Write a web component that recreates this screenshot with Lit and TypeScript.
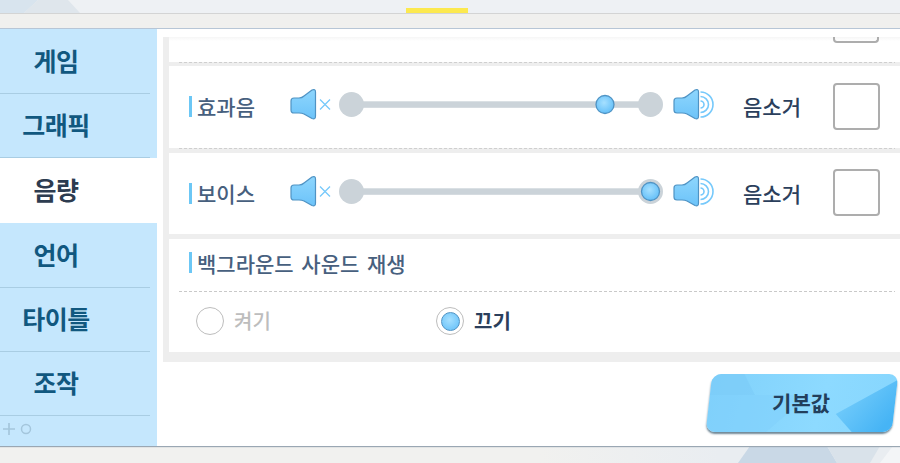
import { LitElement, html, css, svg } from "lit";
import { customElement } from "lit/decorators.js";

const speaker = (x: number) => svg`
  <path d="M${x + 1} 12 Q${x + 1} 9 ${x + 4} 9 L${x + 9} 9 Q${x + 12} 9 ${x + 14} 7 L${x + 22} 1 Q${x + 25.500} -0.500 ${x + 25.500} 3 L${x + 25.500} 27 Q${x + 25.500} 31 ${x + 22} 29.500 L${x + 14} 25 Q${x + 12} 24 ${x + 9} 24 L${x + 4} 24 Q${x + 1} 24 ${x + 1} 21 Z"
    fill="url(#cone)" stroke="#4f93c4" stroke-width="1.200" stroke-linejoin="round"/>`;

@customElement("app-root")
export class AppRoot extends LitElement {
  static styles = css`
    :host {
      display: block;
      width: 900px;
      height: 463px;
      overflow: hidden;
      background: #f1f1ef;
      font-family: "Noto Sans CJK KR", "Noto Sans", sans-serif;
    }
    .page { display: flex; flex-direction: column; height: 463px; position: relative; }
    .top {
      height: 13px;
      flex: none;
      background: #eef1f4;
      border-bottom: 1px solid #d3d4d4;
      position: relative;
      overflow: hidden;
    }
    .top svg { position: absolute; left: 0; top: 0; }
    .yellow { position: absolute; left: 406px; top: 8px; width: 62px; height: 5px; background: #fce94f; }
    .strip { height: 14px; flex: none; background: #f0f0ee; border-bottom: 1px solid #b7c6d6; }
    .main { height: 417px; flex: none; display: flex; background: #fff; box-shadow: 0 1px 1px #9aa7b3; position: relative; z-index: 1; }
    .nav { width: 157px; flex: none; background: #c5e7fd; display: flex; flex-direction: column; padding-top: 1px; box-sizing: border-box; }
    .tab {
      height: 64.200px;
      flex: none;
      box-sizing: border-box;
      display: flex;
      align-items: center;
      color: #11587f;
      font-size: 25px;
      font-weight: 700;
      letter-spacing: -0.500px;
      border-bottom: 1px solid #a9cde3;
      margin-right: 7px;
    }
    .tab span { width: 112px; text-align: center; line-height: 1; margin-top: -2px; }
    .tab.active { background: #fff; color: #2d3c50; margin-right: 0; border-bottom: none; }
    .tab.active + .tab { margin-top: 1px; }
    .navfoot { flex: 1; display: flex; align-items: flex-end; padding: 0 0 10px 2px; }
    .content { flex: 1; min-width: 0; padding: 8px 0 0 6px; display: flex; flex-direction: column; }
    .panel { background: #eeeeee; padding: 0 0 10px 6px; height: 325px; box-sizing: border-box; display: flex; flex-direction: column; }
    .card { background: #fff; flex: none; }
    .clip { height: 25px; display: flex; justify-content: flex-end; padding-right: 21px; background: linear-gradient(#f6f6f6, #fff 4px); }
    .clip i { display: block; width: 46px; height: 6px; box-sizing: border-box; border: 2px solid #adadad; border-top: none; border-radius: 0 0 4px 4px; }
    .sep { height: 4px; flex: none; display: flex; padding: 0 5px 0 10px; }
    .sep i { display: block; flex: 1; height: 1px; background: repeating-linear-gradient(90deg, #cfcfcf 0 3px, transparent 3px 5px); }
    .sep.s5 { height: 5px; }
    .row { height: 82px; display: flex; align-items: center; padding: 0 0 2px 20px; box-sizing: border-box; }
    .row.r2 { height: 81px; }
    .name { display: flex; align-items: center; width: 101px; flex: none; color: #47607e; font-size: 21px; font-weight: 500; line-height: 1; margin-top: 1px; }
    .bar { width: 3px; height: 21px; background: #6cc7f5; margin-right: 5px; flex: none; }
    .slider { flex: none; display: block; overflow: visible; }
    .mute { margin-left: 27px; width: 90px; flex: none; color: #2b3f5c; font-size: 21px; font-weight: 500; line-height: 1; margin-top: 1px; }
    .box { width: 47px; height: 47px; box-sizing: border-box; border: 2px solid #adadad; border-radius: 4px; flex: none; background: #fff; }
    .bg { height: 113px; padding: 13px 5px 0 10px; box-sizing: border-box; }
    .title { display: flex; align-items: center; padding-left: 10px; color: #47607e; font-size: 21px; font-weight: 500; line-height: 1; height: 21px; word-spacing: 3px; }
    .title b { font-weight: 500; margin-top: 2px; }
    .dash { height: 1px; margin-top: 18px; background: repeating-linear-gradient(90deg, #c9c9c9 0 3px, transparent 3px 5px); }
    .radios { display: flex; align-items: center; margin-top: 15px; padding-left: 17px; }
    .radio { width: 240px; display: flex; align-items: center; gap: 10px; font-size: 20px; font-weight: 500; line-height: 1; color: #bdbdbd; }
    .radio.on { color: #2b3f5c; font-weight: 700; }
    .circ { width: 28px; height: 28px; box-sizing: border-box; border-radius: 50%; border: 1.500px solid #bdbdbd; background: #fff; display: flex; align-items: center; justify-content: center; flex: none; }
    .dot { width: 19px; height: 19px; box-sizing: border-box; border-radius: 50%; border: 1.500px solid #4f93c4; background: radial-gradient(circle at 45% 40%, #a6e0ff, #5fbdf8); }
    .actions { flex: 1; display: flex; justify-content: flex-end; align-items: flex-start; padding: 12px 5px 0 0; }
    .btn {
      width: 186px;
      height: 58px;
      transform: skewX(-6.500deg);
      border-radius: 9px;
      background: linear-gradient(100deg, #80d1fb 0%, #8ddaff 60%, #86d6fe 100%);
      box-shadow: 0 2px 2px #6f8796;
      display: flex;
      align-items: center;
      justify-content: center;
      color: #233f5c;
      font-size: 21px;
      font-weight: 700;
      overflow: hidden;
      position: relative;
    }
    .btn svg { position: absolute; left: 0; top: 0; }
    .btn span { transform: skewX(6.500deg); line-height: 1; margin-top: -2px; margin-right: 2px; position: relative; }
    .bottom { flex: 1; position: relative; overflow: hidden; background: linear-gradient(90deg, #f1f1ef 60%, #e9edf1 80%); }
    .bottom svg { position: absolute; left: 0; top: 0; }
  `;

  slider(thumb: number) {
    return html`<svg class="slider" width="426" height="34" viewBox="0 0 426 34">
      <defs>
        <linearGradient id="cone" x1="0" x2="0" y1="0" y2="1">
          <stop offset="0" stop-color="#8ed6fd"/>
          <stop offset="1" stop-color="#6cc3f9"/>
        </linearGradient>
        <radialGradient id="ball" cx="0.450" cy="0.400" r="0.650">
          <stop offset="0" stop-color="#a6e0ff"/>
          <stop offset="1" stop-color="#5fbdf8"/>
        </radialGradient>
      </defs>
      ${speaker(0)}
      <path d="M30 10.500 L40 20.500 M40 10.500 L30 20.500" stroke="#76c9fb" stroke-width="1.300" fill="none"/>
      <rect x="61" y="12.300" width="299" height="6.500" fill="#cbd3d9"/>
      <circle cx="61.500" cy="15.500" r="12.500" fill="#cbd3d9"/>
      <circle cx="360.500" cy="15.500" r="12.500" fill="#cbd3d9"/>
      <circle cx="${thumb}" cy="15.500" r="9" fill="url(#ball)" stroke="#4f93c4" stroke-width="1.300"/>
      ${speaker(383)}
      <path d="M410.500 3 A12.500 12.500 0 0 1 410.500 28 M410.500 7.500 A8 8 0 0 1 410.500 23.500 M410.500 12 A3.500 3.500 0 0 1 410.500 19" fill="none" stroke="#76c9fb" stroke-width="1.600"/>
    </svg>`;
  }

  render() {
    return html`<div class="page">
      <div class="top">
        <svg width="90" height="13" viewBox="0 0 90 13">
          <polygon points="0,0 38,0 24,13 0,13" fill="#d8e4ee"/>
          <polygon points="38,0 68,0 80,13 24,13" fill="#dfe6ec"/>
        </svg>
        <div class="yellow"></div>
      </div>
      <div class="strip"></div>
      <div class="main">
        <nav class="nav">
          <div class="tab"><span>게임</span></div>
          <div class="tab"><span>그래픽</span></div>
          <div class="tab active"><span>음량</span></div>
          <div class="tab"><span>언어</span></div>
          <div class="tab"><span>타이틀</span></div>
          <div class="tab"><span>조작</span></div>
          <div class="navfoot">
            <svg width="32" height="14" viewBox="0 0 32 14">
              <path d="M1 7 H13 M7 1 V13" stroke="#a4c6dc" stroke-width="1.700" fill="none"/>
              <circle cx="24" cy="7" r="4.500" stroke="#a4c6dc" stroke-width="1.500" fill="none"/>
            </svg>
          </div>
        </nav>
        <div class="content">
          <div class="panel">
            <div class="card clip"><i></i></div>
            <div class="sep"><i></i></div>
            <div class="card row">
              <div class="name"><span class="bar"></span>효과음</div>
              ${this.slider(315)}
              <div class="mute">음소거</div>
              <div class="box"></div>
            </div>
            <div class="sep s5"><i></i></div>
            <div class="card row r2">
              <div class="name"><span class="bar"></span>보이스</div>
              ${this.slider(360.5)}
              <div class="mute">음소거</div>
              <div class="box"></div>
            </div>
            <div class="sep s5"></div>
            <div class="card bg">
              <div class="title"><span class="bar"></span><b>백그라운드 사운드 재생</b></div>
              <div class="dash"></div>
              <div class="radios">
                <div class="radio"><span class="circ"></span>켜기</div>
                <div class="radio on"><span class="circ"><span class="dot"></span></span>끄기</div>
              </div>
            </div>
          </div>
          <div class="actions">
            <div class="btn">
              <svg width="186" height="58" viewBox="0 0 186 58">
                <defs>
                  <linearGradient id="corner" x1="0" y1="0" x2="1" y2="0.700">
                    <stop offset="0" stop-color="#7fd2fc"/>
                    <stop offset="1" stop-color="#46b4f5"/>
                  </linearGradient>
                </defs>
                <polygon points="0,0 32,0 45,21 0,21" fill="#7cccf8" opacity="0.700"/>
                <polygon points="0,21 100,21 60,58 0,58" fill="#80d0fb" opacity="0.500"/>
                <polygon points="186,6 128,40 146,58 186,58" fill="url(#corner)"/>
              </svg>
              <span>기본값</span>
            </div>
          </div>
        </div>
      </div>
      <div class="bottom">
        <svg width="900" height="17" viewBox="0 0 900 17">
          <polygon points="738,17 750,0 827,0 837,17" fill="#c9d8e6"/>
          <polygon points="827,0 880,0 870,17 837,17" fill="#d9e2ea"/>
          <polygon points="880,17 893,0 900,0 900,17" fill="#f3f5f7"/>
        </svg>
      </div>
    </div>`;
  }
}
